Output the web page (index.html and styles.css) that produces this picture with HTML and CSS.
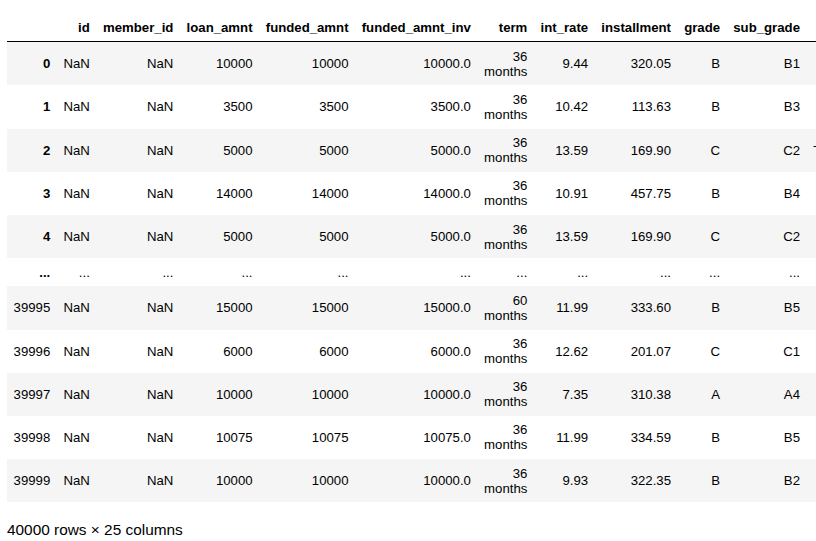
FILE: index.html
```html
<!DOCTYPE html>
<html>
<head>
<meta charset="utf-8">
<link rel="stylesheet" href="styles.css">
</head>
<body>
<div class="output">
<table class="dataframe">
<thead>
<tr><th></th><th>id</th><th>member_id</th><th>loan_amnt</th><th>funded_amnt</th><th>funded_amnt_inv</th><th>term</th><th>int_rate</th><th>installment</th><th>grade</th><th>sub_grade</th><th>emp_title</th><th>emp_length</th></tr>
</thead>
<tbody>
<tr><th>0</th><td>NaN</td><td>NaN</td><td>10000</td><td>10000</td><td>10000.0</td><td>36 months</td><td>9.44</td><td>320.05</td><td>B</td><td>B1</td><td>NaN</td><td>10+ years</td></tr>
<tr><th>1</th><td>NaN</td><td>NaN</td><td>3500</td><td>3500</td><td>3500.0</td><td>36 months</td><td>10.42</td><td>113.63</td><td>B</td><td>B3</td><td>Ryder</td><td>&lt; 1 year</td></tr>
<tr><th>2</th><td>NaN</td><td>NaN</td><td>5000</td><td>5000</td><td>5000.0</td><td>36 months</td><td>13.59</td><td>169.90</td><td>C</td><td>C2</td><td>Transportation</td><td>10+ years</td></tr>
<tr><th>3</th><td>NaN</td><td>NaN</td><td>14000</td><td>14000</td><td>14000.0</td><td>36 months</td><td>10.91</td><td>457.75</td><td>B</td><td>B4</td><td>Correctional Officer</td><td>10+ years</td></tr>
<tr><th>4</th><td>NaN</td><td>NaN</td><td>5000</td><td>5000</td><td>5000.0</td><td>36 months</td><td>13.59</td><td>169.90</td><td>C</td><td>C2</td><td>NaN</td><td>3 years</td></tr>
<tr><th>...</th><td>...</td><td>...</td><td>...</td><td>...</td><td>...</td><td>...</td><td>...</td><td>...</td><td>...</td><td>...</td><td>...</td><td>...</td></tr>
<tr><th class="idx-plain">39995</th><td>NaN</td><td>NaN</td><td>15000</td><td>15000</td><td>15000.0</td><td>60 months</td><td>11.99</td><td>333.60</td><td>B</td><td>B5</td><td>NaN</td><td>2 years</td></tr>
<tr><th class="idx-plain">39996</th><td>NaN</td><td>NaN</td><td>6000</td><td>6000</td><td>6000.0</td><td>36 months</td><td>12.62</td><td>201.07</td><td>C</td><td>C1</td><td>NaN</td><td>5 years</td></tr>
<tr><th class="idx-plain">39997</th><td>NaN</td><td>NaN</td><td>10000</td><td>10000</td><td>10000.0</td><td>36 months</td><td>7.35</td><td>310.38</td><td>A</td><td>A4</td><td>NaN</td><td>1 year</td></tr>
<tr><th class="idx-plain">39998</th><td>NaN</td><td>NaN</td><td>10075</td><td>10075</td><td>10075.0</td><td>36 months</td><td>11.99</td><td>334.59</td><td>B</td><td>B5</td><td>NaN</td><td>4 years</td></tr>
<tr><th class="idx-plain">39999</th><td>NaN</td><td>NaN</td><td>10000</td><td>10000</td><td>10000.0</td><td>36 months</td><td>9.93</td><td>322.35</td><td>B</td><td>B2</td><td>NaN</td><td>3 years</td></tr>
</tbody>
</table>
</div>
<p class="shape">40000 rows × 25 columns</p>
</body>
</html>
```
FILE: styles.css
```css
html, body {
  margin: 0;
  padding: 0;
  overflow: hidden;
  background: #ffffff;
}
body {
  padding: 13px 0 0 7px;
  font-family: "Liberation Sans", Arial, sans-serif;
  color: #000000;
}
.output {
  overflow: hidden;
}
.dataframe {
  border-collapse: collapse;
  border-spacing: 0;
  width: min-content;
  font-size: 13.2px;
  color: #000000;
}
.dataframe th,
.dataframe td {
  text-align: right;
  vertical-align: middle;
  padding: 6.6px;
  line-height: 15px;
  white-space: normal;
  border: none;
}
.dataframe thead {
  border-bottom: 1px solid #000000;
}
.dataframe th {
  font-weight: bold;
}
.dataframe th.idx-plain {
  font-weight: normal;
}
.dataframe tbody tr:nth-child(odd) {
  background: #f5f5f5;
}
.shape {
  margin: 19px 0 0 0;
  font-size: 15.4px;
  line-height: 17px;
}
```
